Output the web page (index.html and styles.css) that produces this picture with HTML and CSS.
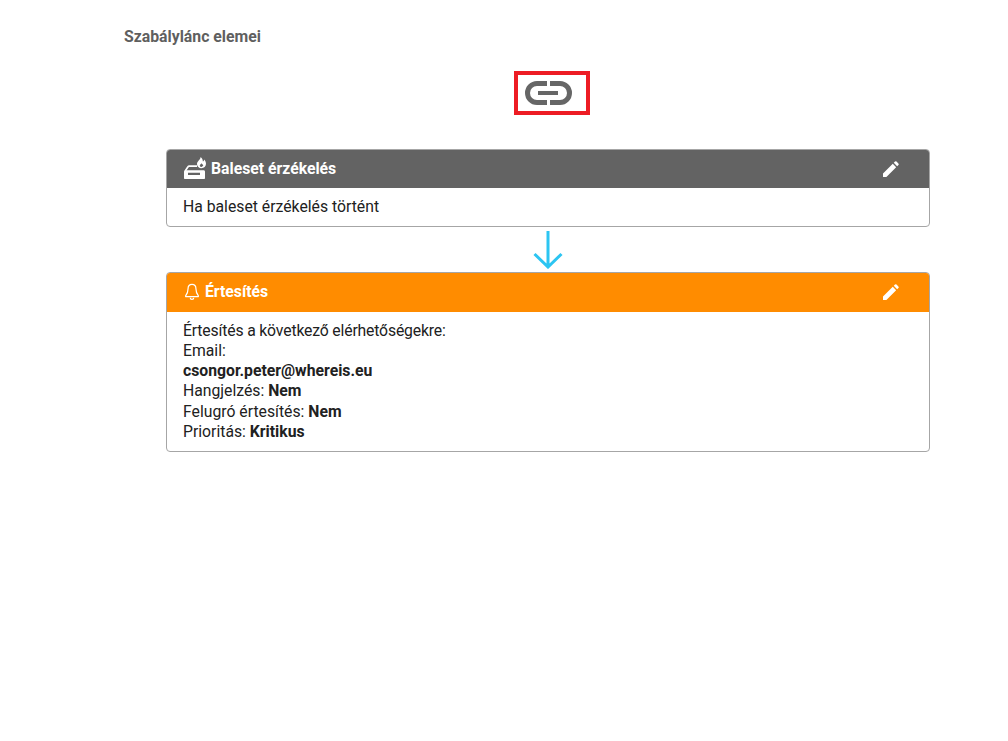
FILE: index.html
```html
<!DOCTYPE html>
<html lang="hu">
<head>
<meta charset="utf-8">
<title>Szabálylánc elemei</title>
<link rel="stylesheet" href="styles.css">
</head>
<body>
<main class="page">
  <h2 class="title">Szabálylánc elemei</h2>
  <div class="link-row">
    <div class="link-box">
      <svg class="link-icon" viewBox="0 0 48 24" width="48" height="24" fill="none" stroke="#666" stroke-width="5">
        <path d="M22 2.500H12a9.500 9.500 0 0 0 0 19H22"/>
        <path d="M25 2.500H35a9.500 9.500 0 0 1 0 19H25"/>
        <path d="M13 12h20" stroke-width="4"/>
      </svg>
    </div>
  </div>
  <section class="chain">
    <article class="card">
      <header class="card-head head-grey">
        <svg class="head-icon crash" viewBox="0 0 23 22" width="23" height="22">
          <path fill="#fff" fill-rule="evenodd" d="M16.500 0c.5 2.300-3.500 4.300-3.500 7 0 2.500 2 4.200 4.500 4.200S22 9.400 22 6.800c0-2-1-3.400-1.800-4.300-.1 1-.6 1.800-1.300 2C18.700 2.800 18.300 1 16.500 0zM17.500 6.200c-.8.900-1.700 1.500-1.700 2.500 0 .8.800 1.200 1.700 1.200s1.700-.4 1.700-1.200c0-1-.9-1.600-1.700-2.500z"/>
          <path fill="none" stroke="#fff" stroke-width="1.700" d="M1.200 14 4 9.800c.3-.5.700-.7 1.300-.7H13"/>
          <path fill="#fff" fill-rule="evenodd" d="M1.500 13.300H19.500c1 0 1.500.6 1.500 1.500V21c0 .6-.4 1-1 1H1c-.6 0-1-.4-1-1V14.800c0-.9.500-1.500 1.500-1.500zM4 15.700V18H16V15.700z"/>
        </svg>
        <span class="head-title">Baleset érzékelés</span>
        <svg class="edit" viewBox="0 0 18 18" width="16" height="16" fill="#fff">
          <path d="M0 18v-3.800L11 3.200 14.800 7 3.800 18zM12.100 2.100l1.400-1.400a1.200 1.200 0 0 1 1.700 0l2.100 2.100a1.200 1.200 0 0 1 0 1.700l-1.400 1.400z"/>
        </svg>
      </header>
      <div class="card-body body-single">Ha baleset érzékelés történt</div>
    </article>
    <div class="arrow-row">
      <svg viewBox="0 0 30 38" width="30" height="38" fill="none" stroke="#2cc5f2" stroke-width="3">
        <path d="M15 0v36M1.500 23 15 36 28.500 23"/>
      </svg>
    </div>
    <article class="card">
      <header class="card-head head-orange">
        <svg class="head-icon bell" viewBox="0 0 16 20" width="14" height="18" fill="none" stroke="#fff" stroke-width="1.400">
          <path d="M8 1.200c-2.900 0-4.500 2.300-4.500 5 0 4.500-1 6-2.800 8.300-.2.400 0 .8.500.8h13.600c.5 0 .7-.4.500-.8-1.800-2.300-2.800-3.800-2.800-8.300 0-2.700-1.600-5-4.500-5z"/>
          <path d="M6 16.500c0 1.200.9 2 2 2s2-.8 2-2"/>
        </svg>
        <span class="head-title">Értesítés</span>
        <svg class="edit" viewBox="0 0 18 18" width="16" height="16" fill="#fff">
          <path d="M0 18v-3.800L11 3.200 14.800 7 3.800 18zM12.100 2.100l1.400-1.400a1.200 1.200 0 0 1 1.700 0l2.100 2.100a1.200 1.200 0 0 1 0 1.700l-1.400 1.400z"/>
        </svg>
      </header>
      <div class="card-body">
        <div class="line-long">Értesítés a következő elérhetőségekre:</div>
        <div>Email:</div>
        <div><strong>csongor.peter@whereis.eu</strong></div>
        <div>Hangjelzés: <strong>Nem</strong></div>
        <div>Felugró értesítés: <strong>Nem</strong></div>
        <div>Prioritás: <strong>Kritikus</strong></div>
      </div>
    </article>
  </section>
</main>
</body>
</html>
```
FILE: styles.css
```css
* { box-sizing: border-box; }
html, body { margin: 0; background: #fff; }
body {
  font-family: Roboto, "Liberation Sans", sans-serif;
  font-size: 15.75px;
  line-height: 20.25px;
  color: #212121;
}
strong { font-weight: 700; }
.page { padding: 28px 78px 0 124px; }
.title {
  margin: 0;
  font-size: 15.8px;
  line-height: 18px;
  font-weight: 700;
  color: #5f5f5f;
}
.link-row {
  display: flex;
  justify-content: center;
  margin-top: 25px;
  padding-left: 50px;
}
.link-box {
  width: 76px;
  height: 44px;
  border: 4px solid #ed1c24;
  display: flex;
  align-items: center;
  padding-left: 7px;
}
.chain { margin: 34px 0 0 42px; }
.card {
  border: 1px solid #a6a6a6;
  border-radius: 4px;
  overflow: hidden;
}
.card-head {
  display: flex;
  align-items: center;
  height: 38px;
  padding: 0 30px 0 17px;
  color: #fff;
  font-weight: 700;
}
.head-grey { background: #636363; }
.head-orange { background: #ff8c00; height: 39px; padding-bottom: 1px; }
.head-icon { flex: none; margin-right: 5px; }
.bell { margin-right: 6px; margin-left: 1px; }
.crash { margin: -3px 4px 0 0; }
.head-title { flex: 1; }
.edit { flex: none; }
.card-body { padding: 8.25px 16px 9px; }
.body-single { padding-top: 9px; }
.line-long { letter-spacing: -0.16px; }
.arrow-row {
  display: flex;
  justify-content: center;
  height: 45px;
  padding-top: 4px;
}
```
